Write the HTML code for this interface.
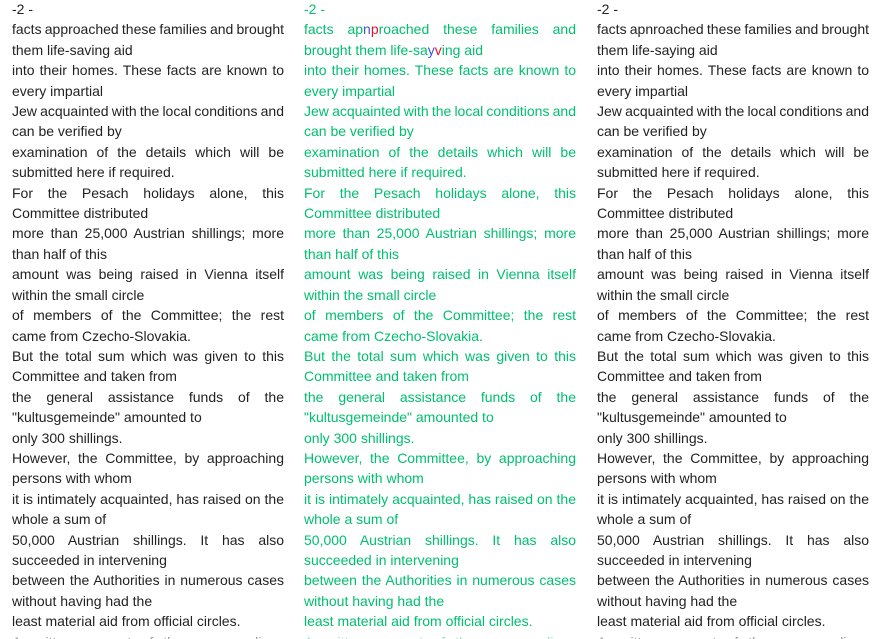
<!DOCTYPE html>
<html><head><meta charset="utf-8"><style>
html,body{margin:0;padding:0;background:#fff;width:877px;height:639px;overflow:hidden}
body{font-family:"Liberation Sans",Arial,sans-serif;font-size:14px;line-height:20.4px;color:#222;position:relative}
.col{position:absolute;top:-1px;width:272px}
.c1{left:12px}.c2{left:304px;color:#00bf6f}.c3{left:597px}
.j{text-align:justify;text-align-last:justify;word-spacing:-3px;white-space:normal}
.fade{position:absolute;left:0;right:0;bottom:0;height:10px;background:linear-gradient(rgba(255,255,255,0),rgba(255,255,255,0.6))}
.r{color:#e8112d}.b{color:#3a56e0}
</style></head><body>
<div class="col c1">
<div>-2 -</div>
<div class="j">facts approached these families and brought</div><div>them life-saving aid</div>
<div class="j">into their homes. These facts are known to</div><div>every impartial</div>
<div class="j">Jew acquainted with the local conditions and</div><div>can be verified by</div>
<div class="j">examination of the details which will be</div><div>submitted here if required.</div>
<div class="j">For the Pesach holidays alone, this</div><div>Committee distributed</div>
<div class="j">more than 25,000 Austrian shillings; more</div><div>than half of this</div>
<div class="j">amount was being raised in Vienna itself</div><div>within the small circle</div>
<div class="j">of members of the Committee; the rest</div><div>came from Czecho-Slovakia.</div>
<div class="j">But the total sum which was given to this</div><div>Committee and taken from</div>
<div class="j">the general assistance funds of the</div><div>"kultusgemeinde" amounted to</div>
<div>only 300 shillings.</div>
<div class="j">However, the Committee, by approaching</div><div>persons with whom</div>
<div class="j">it is intimately acquainted, has raised on the</div><div>whole a sum of</div>
<div class="j">50,000 Austrian shillings. It has also</div><div>succeeded in intervening</div>
<div class="j">between the Authorities in numerous cases</div><div>without having had the</div>
<div>least material aid from official circles.</div>
<div class="j">A written account of these proceedings</div>
</div>
<div class="col c2">
<div>-2 -</div>
<div class="j">facts ap<span class="b">n</span><span class="r">p</span>roached these families and</div><div>brought them life-sa<span class="b">y</span><span class="r">v</span>ing aid</div>
<div class="j">into their homes. These facts are known to</div><div>every impartial</div>
<div class="j">Jew acquainted with the local conditions and</div><div>can be verified by</div>
<div class="j">examination of the details which will be</div><div>submitted here if required.</div>
<div class="j">For the Pesach holidays alone, this</div><div>Committee distributed</div>
<div class="j">more than 25,000 Austrian shillings; more</div><div>than half of this</div>
<div class="j">amount was being raised in Vienna itself</div><div>within the small circle</div>
<div class="j">of members of the Committee; the rest</div><div>came from Czecho-Slovakia.</div>
<div class="j">But the total sum which was given to this</div><div>Committee and taken from</div>
<div class="j">the general assistance funds of the</div><div>"kultusgemeinde" amounted to</div>
<div>only 300 shillings.</div>
<div class="j">However, the Committee, by approaching</div><div>persons with whom</div>
<div class="j">it is intimately acquainted, has raised on the</div><div>whole a sum of</div>
<div class="j">50,000 Austrian shillings. It has also</div><div>succeeded in intervening</div>
<div class="j">between the Authorities in numerous cases</div><div>without having had the</div>
<div>least material aid from official circles.</div>
<div class="j">A written account of these proceedings</div>
</div>
<div class="col c3">
<div>-2 -</div>
<div class="j">facts apnroached these families and brought</div><div>them life-saying aid</div>
<div class="j">into their homes. These facts are known to</div><div>every impartial</div>
<div class="j">Jew acquainted with the local conditions and</div><div>can be verified by</div>
<div class="j">examination of the details which will be</div><div>submitted here if required.</div>
<div class="j">For the Pesach holidays alone, this</div><div>Committee distributed</div>
<div class="j">more than 25,000 Austrian shillings; more</div><div>than half of this</div>
<div class="j">amount was being raised in Vienna itself</div><div>within the small circle</div>
<div class="j">of members of the Committee; the rest</div><div>came from Czecho-Slovakia.</div>
<div class="j">But the total sum which was given to this</div><div>Committee and taken from</div>
<div class="j">the general assistance funds of the</div><div>"kultusgemeinde" amounted to</div>
<div>only 300 shillings.</div>
<div class="j">However, the Committee, by approaching</div><div>persons with whom</div>
<div class="j">it is intimately acquainted, has raised on the</div><div>whole a sum of</div>
<div class="j">50,000 Austrian shillings. It has also</div><div>succeeded in intervening</div>
<div class="j">between the Authorities in numerous cases</div><div>without having had the</div>
<div>least material aid from official circles.</div>
<div class="j">A written account of these proceedings</div>
</div>
<div class="fade"></div>
</body></html>
